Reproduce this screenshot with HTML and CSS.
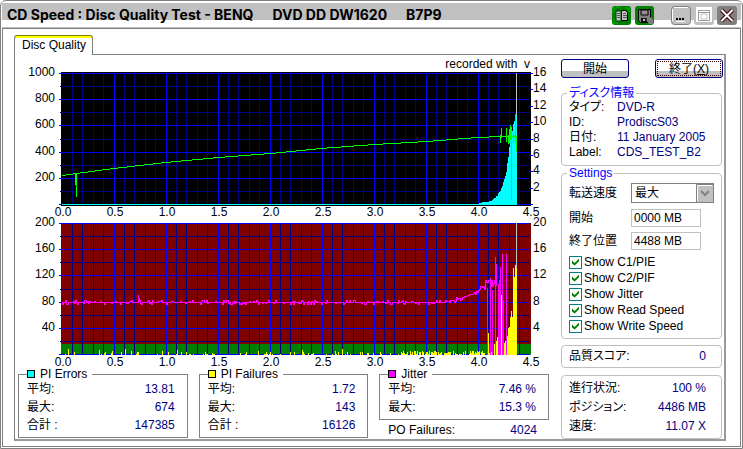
FILE: index.html
```html
<!DOCTYPE html>
<html lang="ja">
<head>
<meta charset="utf-8">
<title>CD Speed : Disc Quality Test</title>
<link rel="stylesheet" href="styles.css">
</head>
<body>
<div class="window">
  <header class="titlebar">
    <h1 class="title"><span>CD Speed : Disc Quality Test - BENQ</span><span>DVD DD DW1620</span><span>B7P9</span></h1>
    <div class="tools">
      <button class="tool" type="button" aria-label="Copy">
        <svg viewBox="0 0 19 19"><rect width="19" height="19" rx="3" fill="#008000"/><path d="M1 7V1H8M14 2h3v4M2 13v4h5" fill="none" stroke="#0c0" stroke-dasharray="2 1"/><path d="M9.500 4.500h4l2 2v8h-6z" fill="#c0c0c0" stroke="#000"/><path d="M4 5h5v10H4z" fill="#c0c0c0" stroke="#004000"/><path d="M5 7.500h3M5 9.500h3M5 11.500h3M11 7.500h3M11 9.500h4M11 11.500h4" stroke="#555"/></svg>
      </button>
      <button class="tool" type="button" aria-label="Save">
        <svg viewBox="0 0 19 19"><rect width="19" height="19" rx="3" fill="#008000"/><path d="M3.500 3.500h12v10l-2 3h-8l-2-2z" fill="#808080" stroke="#000"/><path d="M6 4h7v5H6z" fill="#909090" stroke="#000"/><path d="M6 12h6v4H6z" fill="#111"/><path d="M8 13h2v2H8z" fill="#c0c0c0"/><path d="M11 13l4-2 3 2v5h-4z" fill="#808080"/></svg>
      </button>
    </div>
    <div class="controls">
      <button class="ctl" type="button" aria-label="Minimize">
        <svg viewBox="0 0 20 19"><rect x=".5" y=".5" width="19" height="18" rx="3" fill="#c0c0c0" stroke="#808080"/><path d="M3 1.500h14M1.500 3v12" stroke="#fff"/><path d="M5 13h8" stroke="#000" stroke-width="2" stroke-dasharray="2 1"/><path d="M5 15.500h9" stroke="#fff"/></svg>
      </button>
      <button class="ctl" type="button" aria-label="Maximize">
        <svg viewBox="0 0 20 19"><rect width="20" height="19" rx="3" fill="#c0c0c0"/><path d="M2 1h16v15H2z" fill="#fff"/><path d="M4.500 4.500h11v10h-11zM4 6.500h11" fill="#fff" stroke="#999"/><path d="M7 8h6v5H7z" fill="#fff" stroke="#c0c0c0"/></svg>
      </button>
      <button class="ctl" type="button" aria-label="Close">
        <svg viewBox="0 0 20 19"><rect width="20" height="19" rx="3" fill="#808080"/><path d="M4.500 4l11 11M15.500 4l-11 11" stroke="#400000" stroke-width="4"/><path d="M4.500 4l11 11M15.500 4l-11 11" stroke="#fff" stroke-width="2"/></svg>
      </button>
    </div>
  </header>

  <main class="client">
    <div class="tabs"><button class="tab" type="button">Disc Quality</button></div>
    <div class="panel">
      <section class="results">
        <p class="recorded">recorded with&nbsp; v</p>
        <div class="chart">
          <ol class="scale left"><li>1000</li><li>800</li><li>600</li><li>400</li><li>200</li></ol>
          <svg class="plot" id="errors" viewBox="59 72 474 135" preserveAspectRatio="none" shape-rendering="crispEdges" role="img" aria-label="PI Errors"></svg>
          <ol class="scale right"><li>16</li><li>14</li><li>12</li><li>10</li><li>8</li><li>6</li><li>4</li><li>2</li></ol>
          <ol class="axis"><li>0.0</li><li>0.5</li><li>1.0</li><li>1.5</li><li>2.0</li><li>2.5</li><li>3.0</li><li>3.5</li><li>4.0</li><li>4.5</li></ol>
        </div>
        <div class="chart">
          <ol class="scale left"><li>200</li><li>160</li><li>120</li><li>80</li><li>40</li></ol>
          <svg class="plot" id="failures" viewBox="59 222 474 135" preserveAspectRatio="none" shape-rendering="crispEdges" role="img" aria-label="PI Failures"></svg>
          <ol class="scale right"><li>20</li><li>16</li><li>12</li><li>8</li><li>4</li></ol>
          <ol class="axis"><li>0.0</li><li>0.5</li><li>1.0</li><li>1.5</li><li>2.0</li><li>2.5</li><li>3.0</li><li>3.5</li><li>4.0</li><li>4.5</li></ol>
        </div>
        <div class="stats">
          <fieldset class="stat">
            <legend><i class="key cyan"></i>PI Errors</legend>
            <dl><div><dt>平均:</dt><dd>13.81</dd></div><div><dt>最大:</dt><dd>674</dd></div><div><dt>合計 :</dt><dd>147385</dd></div></dl>
          </fieldset>
          <fieldset class="stat">
            <legend><i class="key yellow"></i>PI Failures</legend>
            <dl><div><dt>平均:</dt><dd>1.72</dd></div><div><dt>最大:</dt><dd>143</dd></div><div><dt>合計 :</dt><dd>16126</dd></div></dl>
          </fieldset>
          <div class="last">
            <fieldset class="stat">
              <legend><i class="key magenta"></i>Jitter</legend>
              <dl><div><dt>平均:</dt><dd>7.46 %</dd></div><div><dt>最大:</dt><dd>15.3 %</dd></div></dl>
            </fieldset>
            <dl class="po"><div><dt>PO Failures:</dt><dd>4024</dd></div></dl>
          </div>
        </div>
      </section>

      <aside class="side">
        <div class="actions">
          <button class="btn" type="button">開始</button>
          <button class="btn focus" type="button">終了(<u>X</u>)</button>
        </div>
        <fieldset class="box info">
          <legend>ディスク情報</legend>
          <dl><div><dt>タイプ:</dt><dd>DVD-R</dd></div><div><dt>ID:</dt><dd>ProdiscS03</dd></div><div><dt>日付:</dt><dd>11 January 2005</dd></div><div><dt>Label:</dt><dd>CDS_TEST_B2</dd></div></dl>
        </fieldset>
        <fieldset class="box settings">
          <legend>Settings</legend>
          <div class="field"><label for="speed">転送速度</label>
            <span class="select"><select id="speed"><option>最大</option></select><svg viewBox="0 0 17 18" aria-hidden="true"><rect width="17" height="18" fill="#c0c0c0"/><path d="M.500 18V.500H17" fill="none" stroke="#808080"/><path d="M1.500 17V1.500H16" fill="none" stroke="#fff"/><path d="M5 7l4 4 4-4" fill="none" stroke="#808080" stroke-width="2"/></svg></span></div>
          <div class="field"><label for="start">開始</label><input class="text" id="start" type="text" value="0000 MB"></div>
          <div class="field"><label for="end">終了位置</label><input class="text" id="end" type="text" value="4488 MB"></div>
          <div class="checks">
            <label><input type="checkbox" checked>Show C1/PIE</label>
            <label><input type="checkbox" checked>Show C2/PIF</label>
            <label><input type="checkbox" checked>Show Jitter</label>
            <label><input type="checkbox" checked>Show Read Speed</label>
            <label><input type="checkbox" checked>Show Write Speed</label>
          </div>
        </fieldset>
        <dl class="box score"><div><dt>品質スコア:</dt><dd>0</dd></div></dl>
        <dl class="box progress"><div><dt>進行状況:</dt><dd>100 %</dd></div><div><dt>ポジション:</dt><dd>4486 MB</dd></div><div><dt>速度:</dt><dd>11.07 X</dd></div></dl>
      </aside>
    </div>
  </main>
</div>
<script src="charts.js"></script>
</body>
</html>
```
FILE: styles.css
```css
* { box-sizing: border-box; }
body {
  margin: 0;
  background: #fff;
  color: #000;
  font: 12px/14px "Liberation Sans", "Noto Sans CJK JP", sans-serif;
  font-feature-settings: "palt";
}
button, input, select { font: inherit; color: inherit; font-feature-settings: inherit; }
ol, dl, dd, p, h1 { margin: 0; padding: 0; list-style: none; }
svg { display: block; }

.window {
  display: flex;
  flex-direction: column;
  min-height: 100vh;
  border: 1px solid #808080;
  border-radius: 6px 6px 0 0;
  padding: 1px;
  background: #fff;
}
.titlebar {
  display: flex;
  align-items: center;
  height: 26px;
  padding: 0 4px 0 5px;
  border-top: 1px solid #fff;
  border-bottom: 1px solid #c0c0c0;
  background: linear-gradient(#c0c0c0 17px, #fff 17px);
}
.title {
  display: flex;
  flex: 1;
  gap: 19px;
  font: bold 14px/20px Inter, "Liberation Sans", sans-serif;
  white-space: pre;
}
.tools, .controls { display: flex; gap: 4px; }
.controls { gap: 3px; margin-left: 17px; }
.tool, .ctl { padding: 0; border: 0; background: none; }
.tool svg { width: 19px; height: 19px; }
.ctl svg { width: 20px; height: 19px; }

.client {
  display: flex;
  flex: 1;
  flex-direction: column;
  padding: 6px 14px 5px 11px;
  border: 1px solid #808080;
}
.tab {
  position: relative;
  z-index: 1;
  display: block;
  height: 20px;
  margin-bottom: -1px;
  padding: 0 6px 0 7px;
  border: 1px solid #808080;
  border-top: 0;
  border-bottom: 0;
  border-radius: 3px 3px 0 0;
  background: #fff;
  box-shadow: inset 0 1px #808000, inset 0 3px #ff0;
}
.panel {
  display: flex;
  flex: 1;
  gap: 11px;
  border: 1px solid #808080;
  border-right-width: 2px;
  border-bottom-width: 2px;
  border-right-color: #999;
  border-bottom-color: #999;
}
.results { flex: 1; min-width: 0; }
.recorded { height: 17px; padding: 2px 20px 0 0; text-align: right; }

.chart {
  display: grid;
  grid-template-columns: 44px 1fr 17px;
  grid-template-rows: 135px 15px;
}
.plot { width: 100%; height: 135px; }
.scale { display: grid; grid-auto-rows: 1fr; height: 131px; margin-top: -6px; line-height: 12px; }
.left { padding-right: 4px; text-align: right; }
.axis {
  display: grid;
  grid-column: 2;
  grid-auto-flow: column;
  grid-auto-columns: 1fr;
  margin: 0 -24px 0 -22px;
  line-height: 11px;
  text-align: center;
}

.stats {
  display: grid;
  grid-template-columns: repeat(3, minmax(0, 1fr));
  gap: 11px;
  align-items: start;
  padding: 0 1px 0 3px;
  margin-top: -4px;
}
fieldset { min-width: 0; margin: 0; }
.stat { padding: 0 12px 3px 8px; border: 1px solid #808080; }
.stat legend { display: flex; gap: 5px; align-items: center; padding: 0 5px 0 0; line-height: 12px; }
.key { width: 8px; height: 8px; border: 1px solid #000; }
.cyan { background: #0ff; }
.yellow { background: #ff0; }
.magenta { background: #f0f; }
dl > div { display: flex; justify-content: space-between; }
dd { color: #000080; }
.stat dl > div { line-height: 18px; }
.po { padding: 3px 12px 0 9px; }

.side { width: 163px; padding-top: 4px; }
.actions { display: flex; justify-content: space-between; padding: 0 1px 0 0; }
.btn {
  width: 68px;
  height: 19px;
  padding: 0;
  border: 1px solid #000080;
  border-radius: 3px;
  background: linear-gradient(#fff 11px, #c0c0c0 11px);
  line-height: 16px;
}
.focus { outline: 1px dotted #400000; outline-offset: -3px; }
.box { width: 161px; border: 1px solid #c0c0c0; border-radius: 4px; padding: 0 7px; }
.box legend { padding: 0 2px; margin-left: -2px; color: #00f; }
.info { height: 80px; margin-top: 8px; }
.info dt { width: 48px; }
.info dl > div { justify-content: flex-start; line-height: 15px; }
.settings { height: 173px; }
.field { display: flex; align-items: center; height: 23px; }
.field label { width: 62px; }
.field:first-of-type { height: 26px; }
.select { position: relative; width: 83px; height: 20px; }
.select select {
  width: 100%;
  height: 100%;
  padding: 0 0 0 3px;
  border: 1px solid #808080;
  background: #fff;
  appearance: none;
}
.select svg { position: absolute; top: 1px; right: 1px; width: 17px; height: 18px; pointer-events: none; }
.text { width: 70px; height: 18px; padding: 0 2px; border: 1px solid #c0c0c0; background: #fff; }
.checks { padding-top: 2px; }
.checks label { display: flex; gap: 2px; align-items: center; height: 16px; }
.checks input {
  display: grid;
  place-content: center;
  width: 13px;
  height: 13px;
  margin: 0;
  border: 1px solid #008080;
  background: #fff;
  appearance: none;
}
.checks input:checked::before {
  content: "";
  width: 7px;
  height: 7px;
  background: #008000;
  clip-path: polygon(0 30%, 38% 65%, 100% 0, 100% 40%, 38% 100%, 0 70%);
}
.score { margin-top: 6px; line-height: 21px; }
.progress { margin-top: 7px; padding-top: 3px; padding-bottom: 2px; line-height: 19px; }
.score, .progress { padding-right: 15px; }
```
FILE: charts.js
```js
const NS = "http://www.w3.org/2000/svg";

// Repeatable noise, so the traces look the same on each load.
let seed = 7;
const rnd = () => (seed = (seed * 16807) % 2147483647) / 2147483647;

function add(svg, tag, attrs) {
  const node = document.createElementNS(NS, tag);
  for (const k in attrs) node.setAttribute(k, attrs[k]);
  svg.appendChild(node);
}
const rect = (svg, x, y, width, height, fill) => add(svg, "rect", { x, y, width, height, fill });

function grid(svg, top) {
  for (const major of [false, true]) {
    const color = major ? "#0000ff" : "#000080";
    for (let i = 1; i < 45; i++) {
      if ((i % 5 === 0) === major) rect(svg, Math.round(61.6 + i * 10.4), top, 1, 132, color);
    }
    for (let i = 0; i <= 10; i++) {
      if ((i % 2 === 0) === major) rect(svg, major ? 59 : 60, top + Math.round(i * 13.1), 470, 1, color);
    }
  }
}

function interpolate(points, x) {
  let i = 1;
  while (i < points.length - 1 && points[i][0] < x) i++;
  const [x0, y0] = points[i - 1], [x1, y1] = points[i];
  return y0 + (y1 - y0) * (x - x0) / (x1 - x0);
}

// Upper chart: PI errors and read speed
const a = document.getElementById("errors");
rect(a, 61, 72, 470, 134, "#000");
grid(a, 73);
for (let i = 0; i <= 8; i++) rect(a, 529, 73 + Math.round(i * 16.4), 4, 1, "#00f");
rect(a, 62, 204, 454, 1, "#0ff");
const errors = [[478, 1], [482, 2], [490, 3], [494, 6], [497, 9], [500, 14], [502, 18], [503, 22], [506, 32], [508, 50], [509, 60], [511, 72], [513, 84], [516, 90]];
for (let x = 478; x < 517; x++) {
  const h = Math.round(interpolate(errors, x) + (x > 507 ? rnd() * 8 - 5 : rnd()));
  rect(a, x, 205 - h, 1, h, "#0ff");
}
rect(a, 516, 73, 1, 42, "#c0c0c0");
const speed = [[62, 175], [76, 173], [113, 168], [165, 162], [218, 157], [270, 153], [320, 148], [374, 144], [426, 141], [477, 137], [500, 136], [516, 136]];
for (let x = 62; x < 517; x++) rect(a, x, Math.round(interpolate(speed, x)), 1, 1, "#0f0");
for (const [x, y, h] of [[75, 174, 11], [76, 174, 23], [500, 135, 8], [501, 128, 10], [506, 128, 14], [508, 135, 9], [509, 129, 14], [510, 125, 15], [511, 127, 73], [513, 132, 11], [514, 135, 3], [515, 114, 29], [516, 137, 15]]) {
  rect(a, x, y, 1, h, "#0f0");
}

// Lower chart: PI failures and jitter
const b = document.getElementById("failures");
rect(b, 61, 223, 470, 121, "#800000");
rect(b, 61, 344, 470, 11, "#008000");
grid(b, 223);
for (let x = 62; x < 485; x++) {
  const dense = x > 400 ? 0.75 : x > 300 ? 0.3 : 0.22;
  if (rnd() < dense) {
    const h = 1 + Math.floor(rnd() * (x > 400 ? 4 : rnd() < 0.3 ? 6 : 3));
    rect(b, x, 355 - h, 1, h, "#ff0");
  }
}
const jitter = [[62, 302], [440, 302], [446, 301], [460, 298], [470, 294], [478, 290], [484, 285], [488, 281], [492, 286], [494, 280]];
let last = 302;
for (let x = 62; x < 495; x++) {
  const spread = x > 478 ? 10 : 5;
  const y = Math.round(interpolate(jitter, x) + (rnd() < 0.5 ? (rnd() - 0.5) * spread : 0));
  rect(b, x, Math.min(y, last), 1, Math.max(1, Math.abs(y - last) + 1), "#f0f");
  last = y;
}
rect(b, 138, 295, 1, 8, "#f0f");
rect(b, 139, 298, 1, 4, "#f0f");
for (const [x, y, w, h] of [[487, 288, 1, 67], [490, 278, 1, 77], [492, 290, 1, 65], [495, 257, 1, 98], [496, 264, 1, 22], [498, 284, 1, 71], [499, 280, 2, 75], [500, 267, 1, 88], [502, 254, 1, 101], [503, 300, 1, 55], [506, 254, 1, 101]]) {
  rect(b, x, y, w, h, "#f0f");
}
for (const [x, h] of [[488, 22], [489, 2], [491, 3], [494, 11], [496, 14], [497, 18], [501, 60], [504, 12], [505, 14], [507, 19], [508, 27], [509, 28], [510, 38], [511, 44], [512, 38], [513, 87], [514, 78], [515, 90], [516, 94]]) {
  rect(b, x, 355 - h, 1, h, "#ff0");
}
rect(b, 516, 223, 1, 45, "#c0c0c0");
```
